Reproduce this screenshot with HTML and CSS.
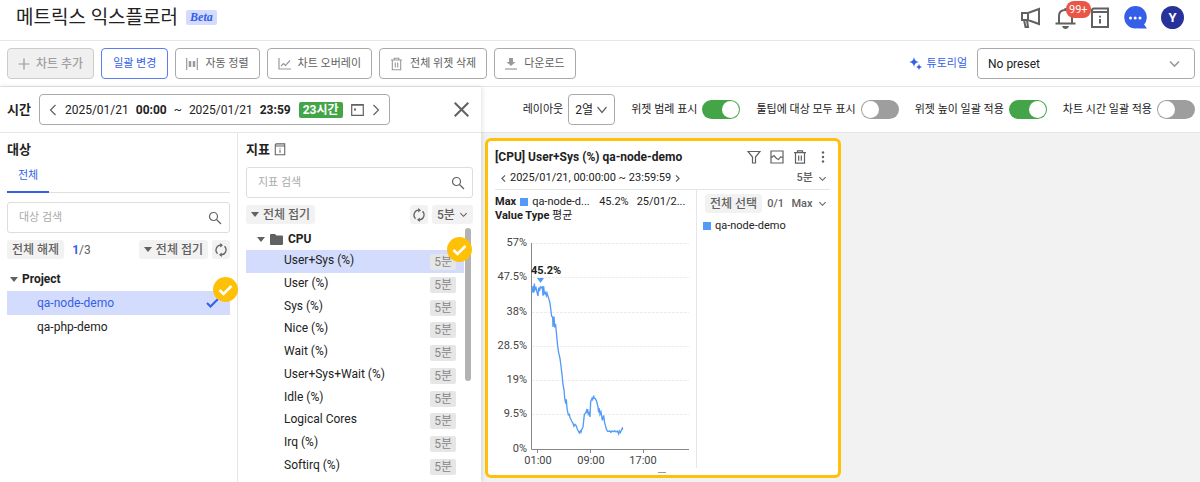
FILE: index.html
```html
<!DOCTYPE html>
<html lang="ko">
<head>
<meta charset="utf-8">
<title>메트릭스 익스플로러</title>
<link rel="stylesheet" href="styles.css">
</head>
<body>
<svg class="defs" aria-hidden="true">
  <symbol id="search" viewBox="0 0 14 14"><circle cx="5.5" cy="5.5" r="4" /><path d="M8.500 8.500 13 13" /></symbol>
  <symbol id="sync" viewBox="0 0 14 14"><path d="M3.500 10.800A5 5 0 0 1 6.500 2.200M10.500 3.200A5 5 0 0 1 7.500 11.800" /><path class="fill" d="M6.200 0 9 2.300 6.200 4.600ZM7.800 9.400 5 11.700 7.800 14Z" /></symbol>
  <symbol id="down" viewBox="0 0 10 10"><path d="M1.500 3.500 5 7 8.500 3.500" /></symbol>
  <symbol id="wide-down" viewBox="0 0 12 12"><path d="M1.500 3 6 8.500 10.500 3" /></symbol>
  <symbol id="left" viewBox="0 0 8 14"><path d="M6.500 2 1.500 7 6.500 12" /></symbol>
  <symbol id="right" viewBox="0 0 8 14"><path d="M1.500 2 6.500 7 1.500 12" /></symbol>
  <symbol id="trash" viewBox="0 0 14 14"><path d="M1 2.700H13M4.500 2.500V.8H9.500V2.500M2.500 3V13.200H11.500V3M5.700 5.500V10.700M8.300 5.500V10.700" /></symbol>
  <symbol id="guide" viewBox="0 0 20 22"><path d="M18 5V20H2V3.500Q2 1.500 4 1.500H18V5H3M10 8.800V10.500M10 12V16.500" /></symbol>
</svg>

<header class="header">
  <h1 class="title">메트릭스 익스플로러</h1>
  <span class="beta">Beta</span>
  <nav class="header-icons">
    <button class="plain" aria-label="공지"><svg class="icon thick" width="21" height="22" viewBox="0 0 21 22"><path d="M2 6H8L19 2V17L8 13H2ZM8 6V13M4 13 5.500 20H8L7 13" /></svg></button>
    <button class="plain bell" aria-label="알림"><svg class="icon thick" width="21" height="24" viewBox="0 0 21 24"><path d="M4 17V10Q4 4 10.500 4T17 10V17M.5 17.500H20.500M10.500 2V4" /><path class="fill" d="M7 20H14Q13 23 10.500 23T7 20Z" /></svg><span class="count">99+</span></button>
    <button class="plain" aria-label="가이드"><svg class="icon thick" width="20" height="22"><use href="#guide" /></svg></button>
    <button class="plain" aria-label="채팅"><svg width="23" height="23" viewBox="0 0 23 23"><path fill="#355fe9" d="M11.500 0A11.200 11.200 0 1 1 11.500 22.500 11.200 11.200 0 0 1 11.500 0ZM19 17 23 22.500H14Z" /><g fill="#fff"><circle cx="6.500" cy="12" r="1.500" /><circle cx="11.200" cy="12" r="1.500" /><circle cx="16" cy="12" r="1.500" /></g></svg></button>
    <button class="avatar">Y</button>
  </nav>
</header>

<div class="toolbar">
  <button class="btn add" disabled><svg class="icon" width="12" height="12" viewBox="0 0 12 12"><path d="M6 .5V11.500M.5 6H11.500" /></svg>차트 추가</button>
  <button class="btn primary">일괄 변경</button>
  <button class="btn"><svg class="icon" width="12" height="12" viewBox="0 0 12 12"><path d="M.7 0V12M11.300 0V12" /><path class="bars" d="M4 3V9M8 3V9" /></svg>자동 정렬</button>
  <button class="btn"><svg class="icon" width="13" height="12" viewBox="0 0 13 12"><path d="M1 0V11H13M3 8 5.500 5.500 7.500 7.500 12 2.500" /></svg>차트 오버레이</button>
  <button class="btn"><svg class="icon" width="13" height="14"><use href="#trash" /></svg>전체 위젯 삭제</button>
  <button class="btn"><svg class="icon" width="12" height="13" viewBox="0 0 12 13"><path class="fill" d="M4 1H8V5H10.500L6 9 1.500 5H4Z" /><path d="M0 12H12" /></svg>다운로드</button>
  <a class="tutorial" href="#tutorial"><svg width="13" height="13" viewBox="0 0 13 13"><path fill="#355fe9" d="M5 0Q5.500 4.500 10 5 5.500 5.500 5 10 4.500 5.500 0 5 4.500 4.500 5 0ZM10 7Q10.400 9.600 13 10 10.400 10.400 10 13 9.600 10.400 7 10 9.600 9.600 10 7Z" /></svg>튜토리얼</a>
  <label class="select preset"><select aria-label="프리셋"><option>No preset</option></select><svg class="icon" width="13" height="13"><use href="#down" /></svg></label>
</div>

<main class="main">
  <section class="panel">
    <div class="time-row">
      <strong class="time-label">시간</strong>
      <div class="range">
        <button class="plain" aria-label="이전"><svg class="icon" width="8" height="14"><use href="#left" /></svg></button>
        <div class="dates"><span>2025/01/21</span><b>00:00</b><span>~</span><span>2025/01/21</span><b>23:59</b></div>
        <span class="hours">23시간</span>
        <button class="plain" aria-label="달력"><svg class="icon" width="13" height="13" viewBox="0 0 13 13"><path d="M.7 1.500H12.300V12.300H.7ZM.7 2.200H12.300" /><path class="fill" d="M3 5.500H5V7.500H3Z" /></svg></button>
        <button class="plain" aria-label="다음"><svg class="icon" width="8" height="14"><use href="#right" /></svg></button>
      </div>
      <button class="plain close" aria-label="닫기"><svg class="icon thick" width="15" height="15" viewBox="0 0 15 15"><path d="M.7.7 14.300 14.300M14.300.7.7 14.300" /></svg></button>
    </div>
    <div class="columns">
      <section class="targets">
        <h2>대상</h2>
        <div class="tabs"><button class="tab">전체</button></div>
        <label class="search"><input type="text" placeholder="대상 검색" aria-label="대상 검색"><svg class="icon" width="14" height="14"><use href="#search" /></svg></label>
        <div class="chips">
          <button class="chip">전체 해제</button>
          <span class="ratio"><b>1</b>/3</span>
          <button class="chip push"><i class="caret"></i>전체 접기</button>
          <button class="chip square" aria-label="새로고침"><svg class="icon" width="14" height="14"><use href="#sync" /></svg></button>
        </div>
        <div class="project"><i class="caret"></i>Project</div>
        <ul class="tree">
          <li class="on">qa-node-demo<svg class="icon" width="13" height="10" viewBox="0 0 13 10"><path d="M1 5 4.500 8.500 12 1" /></svg><span class="mark"><svg width="15" height="12" viewBox="0 0 15 12"><path d="M1.500 6 5.500 10 13.500 2" /></svg></span></li>
          <li>qa-php-demo</li>
        </ul>
      </section>
      <section class="metrics">
        <h2>지표<svg class="icon" width="12" height="13"><use href="#guide" /></svg></h2>
        <label class="search"><input type="text" placeholder="지표 검색" aria-label="지표 검색"><svg class="icon" width="14" height="14"><use href="#search" /></svg></label>
        <div class="chips">
          <button class="chip"><i class="caret"></i>전체 접기</button>
          <button class="chip square push" aria-label="새로고침"><svg class="icon" width="14" height="14"><use href="#sync" /></svg></button>
          <label class="select chip"><select aria-label="간격"><option>5분</option></select><svg class="icon" width="9" height="9"><use href="#down" /></svg></label>
        </div>
        <div class="scroll">
          <div class="group"><i class="caret"></i><svg width="13" height="11" viewBox="0 0 13 11"><path fill="#616161" d="M1 0H5L6.500 1.500H12Q13 1.500 13 2.500V10Q13 11 12 11H1Q0 11 0 10V1Q0 0 1 0Z" /></svg>CPU</div>
          <ul class="list">
            <li class="on">User+Sys (%)<span>5분</span></li>
            <li>User (%)<span>5분</span></li>
            <li>Sys (%)<span>5분</span></li>
            <li>Nice (%)<span>5분</span></li>
            <li>Wait (%)<span>5분</span></li>
            <li>User+Sys+Wait (%)<span>5분</span></li>
            <li>Idle (%)<span>5분</span></li>
            <li>Logical Cores<span>5분</span></li>
            <li>Irq (%)<span>5분</span></li>
            <li>Softirq (%)<span>5분</span></li>
          </ul>
          <div class="thumb"></div>
          <span class="mark"><svg width="15" height="12" viewBox="0 0 15 12"><path d="M1.500 6 5.500 10 13.500 2" /></svg></span>
        </div>
      </section>
    </div>
  </section>

  <section class="board">
    <div class="options">
      <div class="option"><label for="layout">레이아웃</label><span class="select layout"><select id="layout"><option>2열</option></select><svg class="icon" width="12" height="12"><use href="#wide-down" /></svg></span></div>
      <label class="option">위젯 범례 표시<input type="checkbox" class="switch" checked></label>
      <label class="option">툴팁에 대상 모두 표시<input type="checkbox" class="switch"></label>
      <label class="option">위젯 높이 일괄 적용<input type="checkbox" class="switch" checked></label>
      <label class="option">차트 시간 일괄 적용<input type="checkbox" class="switch"></label>
    </div>
    <div class="grid">
      <article class="widget">
        <div class="widget-head">
          <h3>[CPU] User+Sys (%) qa-node-demo</h3>
          <button class="plain" aria-label="필터"><svg class="icon" width="14" height="14" viewBox="0 0 14 14"><path d="M1 1.500H13L8.500 7V13H5.500V7Z" /></svg></button>
          <button class="plain" aria-label="차트"><svg class="icon" width="14" height="14" viewBox="0 0 14 14"><path d="M1 1H13V13H1ZM1 8 4 5.500 6.500 8.500 8.500 9.500 10.500 7 13 7.500" /></svg></button>
          <button class="plain" aria-label="삭제"><svg class="icon" width="14" height="14"><use href="#trash" /></svg></button>
          <button class="plain" aria-label="더보기"><svg width="14" height="14" viewBox="0 0 14 14" fill="#616161"><circle cx="7" cy="2.500" r="1.200" /><circle cx="7" cy="7" r="1.200" /><circle cx="7" cy="11.500" r="1.200" /></svg></button>
        </div>
        <div class="widget-time">
          <button class="plain" aria-label="이전"><svg class="icon small" width="5" height="9"><use href="#left" /></svg></button>
          <span>2025/01/21, 00:00:00 ~ 23:59:59</span>
          <button class="plain" aria-label="다음"><svg class="icon small" width="5" height="9"><use href="#right" /></svg></button>
          <label class="select push"><select aria-label="위젯 간격"><option>5분</option></select><svg class="icon" width="9" height="9"><use href="#down" /></svg></label>
        </div>
        <div class="widget-body">
          <div class="plot">
            <div class="summary"><b>Max</b><i class="swatch"></i><span class="name">qa-node-d...</span><span>45.2%</span><span class="when">25/01/2...</span></div>
            <div class="kind"><b>Value Type</b> 평균</div>
            <svg class="chart" width="200" height="237" viewBox="0 0 200 237" role="img" aria-label="CPU User+Sys">
              <path class="gridline" d="M37 12.500H194M37 46.500H194M37 81.500H194M37 115.500H194M37 149.500H194M37 183.500H194" />
              <path class="axis" d="M36.500 12V218.500H194M42.500 218V222M95.500 218V222M148.500 218V222" />
              <g class="ylabel"><text x="32" y="15">57%</text><text x="32" y="49">47.5%</text><text x="32" y="84">38%</text><text x="32" y="118">28.5%</text><text x="32" y="152">19%</text><text x="32" y="186">9.5%</text><text x="32" y="221">0%</text></g>
              <g class="xlabel"><text x="43" y="233">01:00</text><text x="96" y="233">09:00</text><text x="148" y="233">17:00</text></g>
              <path class="pin" d="M42 47H49L45.500 52Z" />
              <text class="peak" x="36" y="43">45.2%</text>
              <g transform="translate(-11 0) scale(.3333)"><polyline class="line" points="143,170 145,184 147,165 149,185 151,158 153,176 156,170 159,183 162,195 164,170 167,180 169,168 172,170 175,168 177,194 179,166 181,188 184,184 187,194 189,186 192,196 195,205 198,216 201,240 203,256 206,258 207,288 210,257 212,286 215,282 218,314 221,345 224,365 228,382 231,405 234,430 237,460 240,476 242,501 245,518 247,505 249,532 253,552 256,550 258,560 263,570 267,577 270,586 273,580 276,583 280,594 283,600 286,606 289,600 291,604 294,594 297,588 299,570 301,550 305,546 308,538 310,546 311,534 313,550 316,545 318,558 320,512 324,502 326,506 329,494 331,502 334,503 338,511 342,528 344,544 346,532 348,550 351,543 355,568 359,553 362,576 365,586 368,597 371,601 378,600 381,604 384,600 389,602 392,599 396,603 400,600 404,609 406,600 409,605 412,598 415,592 416,597" /></g>
            </svg>
          </div>
          <div class="legend">
            <div class="legend-head"><button class="chip">전체 선택</button><span class="num">0/1</span><label class="select push"><select aria-label="정렬"><option>Max</option></select><svg class="icon" width="9" height="9"><use href="#down" /></svg></label></div>
            <div class="legend-item"><i class="swatch"></i>qa-node-demo</div>
          </div>
        </div>
        <div class="handle"></div>
      </article>
    </div>
  </section>
</main>
</body>
</html>
```
FILE: styles.css
```css
* { box-sizing: border-box; }
body {
  margin: 0;
  min-height: 100vh;
  display: flex;
  flex-direction: column;
  background: #fff;
  color: #222;
  font: 12px/16px Roboto, "Noto Sans CJK KR", sans-serif;
}
h1, h2, h3, ul { margin: 0; padding: 0; list-style: none; }
button, select, input { font: inherit; color: inherit; }
button { cursor: pointer; white-space: nowrap; }
b, strong { font-weight: 700; }
.defs { position: absolute; width: 0; height: 0; }
.icon { flex: none; fill: none; stroke: #616161; stroke-width: 1.2; }
.thick { stroke-width: 2; }
.small { stroke-width: 2; }
.fill { fill: #616161; stroke: none; }
.plain { display: flex; padding: 0; border: 0; background: none; }
.push { margin-left: auto; }

.header { display: flex; align-items: center; height: 41px; padding: 0 16px; border-bottom: 1px solid #e6e6e6; }
.title { padding-bottom: 5px; font-size: 19px; line-height: 24px; font-weight: 400; }
.beta { margin: 0 0 5px 8px; padding: 0 4px; border-radius: 2px; background: #d3dcfc; color: #355fe9; font: italic 700 12px/15px "Liberation Serif", serif; }
.header-icons { display: flex; align-items: center; gap: 14px; margin-left: auto; padding-bottom: 5px; }
.bell { position: relative; }
.count { position: absolute; left: 11px; top: -5px; padding: 0 3px; border-radius: 8px; background: #ea5546; color: #fff; font-size: 11px; line-height: 17px; }
.avatar { width: 23px; height: 23px; padding: 0; border: 0; border-radius: 50%; background: #27329a; color: #fff; font-weight: 700; font-size: 13px; }

.toolbar { display: flex; align-items: center; gap: 7px; height: 46px; padding: 0 5px 0 7px; border-bottom: 1px solid #e6e6e6; }
.btn { display: flex; align-items: center; gap: 7px; height: 31px; padding: 0 10px; border: 1px solid #aaa; border-radius: 4px; background: #fff; color: #616161; font-size: 11px; }
.btn .icon { stroke: #999; }
.btn .fill { fill: #999; stroke: none; }
.btn .bars { stroke-width: 2.5; }
.btn.add { gap: 6px; border-color: #ccc; background: #f0f0f0; color: #a0a0a0; font-size: 12px; font-weight: 500; }
.btn.primary { padding: 0 11px; border-color: #5b7df0; color: #355fe9; }
.tutorial { display: flex; align-items: center; gap: 5px; margin: 0 3px 0 auto; color: #355fe9; font-size: 11px; text-decoration: none; }
.select { display: inline-flex; align-items: center; }
.select select { appearance: none; padding: 0; border: 0; background: none; outline: 0; }
.preset { width: 218px; height: 31px; padding: 0 13px 0 10px; border: 1px solid #aaa; border-radius: 4px; }
.preset select { flex: 1; }
.preset .icon { stroke: #999; }

.main { flex: 1; display: flex; }
.panel { flex: none; display: flex; flex-direction: column; width: 481px; box-shadow: 1px 0 5px rgba(0, 0, 0, .12); z-index: 1; }
.time-row { display: flex; align-items: center; height: 46px; padding: 0 12px 0 7px; border-bottom: 1px solid #e6e6e6; }
.time-label { font-size: 13px; }
.range { display: flex; align-items: center; gap: 8px; height: 31px; margin-left: 8px; padding: 0 9px; border: 1px solid #aaa; border-radius: 4px; white-space: nowrap; }
.dates { display: flex; gap: 7px; }
.hours { padding: 0 4px; border-radius: 2px; background: #43a547; color: #fff; font-weight: 700; }
.close { margin-left: auto; }
.columns { flex: 1; display: flex; }
.targets { width: 238px; padding: 8px 7px; border-right: 1px solid #e6e6e6; }
.metrics { flex: 1; display: flex; flex-direction: column; padding: 8px 8px 5px; }
h2 { display: flex; align-items: center; gap: 4px; font-size: 13px; line-height: 17px; }
h2 .icon { stroke-width: 1.8; }
.tabs { display: flex; height: 35px; border-bottom: 1px solid #e0e0e0; }
.tab { height: 35px; padding: 4px 11px 2px; border: 0; border-bottom: 2px solid #355fe9; background: none; color: #355fe9; font-size: 11px; }
.search { display: flex; align-items: center; height: 31px; margin-top: 9px; padding: 0 7px 0 11px; border: 1px solid #ddd; border-radius: 3px; }
.search input { flex: 1; min-width: 0; padding: 0; border: 0; outline: 0; font-size: 11px; }
.search input::placeholder { color: #aaa; }
.chips { display: flex; align-items: center; gap: 4px; margin-top: 7px; }
.chip { display: flex; align-items: center; gap: 4px; height: 19px; padding: 0 5px; border: 0; border-radius: 3px; background: #f2f2f2; color: #616161; font-size: 12px; font-weight: 500; }
.square { padding: 0 2px; }
.ratio { margin-left: 4px; color: #616161; }
.ratio b { color: #355fe9; }
.caret { flex: none; border: 4px solid transparent; border-top: 5px solid #616161; border-bottom: 0; }
.project { display: flex; align-items: center; gap: 4px; margin-top: 8px; padding-left: 3px; line-height: 24px; font-weight: 700; }
.tree li { position: relative; display: flex; align-items: center; justify-content: space-between; padding: 0 11px 0 30px; line-height: 24px; }
.on { background: #d3dcfc; }
.tree .on { color: #355fe9; }
.tree .icon { stroke: #355fe9; stroke-width: 2; }
.mark { position: absolute; right: -8px; top: -14px; display: flex; align-items: center; justify-content: center; width: 25px; height: 25px; border-radius: 50%; background: #ffc107; }
.mark path { fill: none; stroke: #fff; stroke-width: 2.5; }
.metrics .search, .metrics .chips { flex: none; }
.scroll { flex: 1; position: relative; display: flex; flex-direction: column; margin-top: 4px; }
.group { display: flex; align-items: center; gap: 5px; padding-left: 11px; line-height: 22px; font-weight: 700; }
.list { flex: 1; display: flex; flex-direction: column; margin-right: 9px; }
.list li { flex: 1; display: flex; align-items: center; justify-content: space-between; padding: 0 8px 2px 38px; }
.list span { margin-top: 4px; padding: 0 4px; border-radius: 2px; background: #e6e6e6; color: #888; }
.thumb { position: absolute; right: 2px; top: 0; width: 6px; height: 153px; border-radius: 3px; background: #b3b3b3; }
.scroll .mark { right: 1px; top: 9px; }

.board { flex: 1; display: flex; flex-direction: column; min-width: 0; }
.options { display: flex; align-items: center; justify-content: flex-end; gap: 16px; height: 46px; padding-right: 5px; border-bottom: 1px solid #e6e6e6; font-size: 11px; white-space: nowrap; }
.option { display: flex; align-items: center; gap: 5px; }
.layout { gap: 3px; height: 31px; padding: 0 6px; border: 1px solid #aaa; border-radius: 4px; font-size: 12px; }
.switch { appearance: none; display: flex; align-items: center; width: 38px; height: 19px; margin: 0; padding: 0 1px; border-radius: 10px; background: #9e9e9e; }
.switch::before { content: ""; width: 17px; height: 17px; border-radius: 50%; background: #fff; }
.switch:checked { justify-content: flex-end; background: #43a547; }
.grid { flex: 1; display: grid; grid-template-columns: repeat(2, 1fr); align-items: start; padding: 5px 4px 4px; background: #f2f2f2; }
.widget { padding: 6px 8px 2px 7px; border: 3px solid #ffc107; border-radius: 6px; background: #fff; }
.widget-head { display: flex; align-items: center; gap: 9px; }
h3 { flex: 1; font-size: 12px; line-height: 20px; white-space: nowrap; }
.widget-time { display: flex; align-items: center; gap: 4px; height: 22px; padding: 0 3px 0 6px; font-size: 11px; }
.widget .select { gap: 4px; color: #616161; font-size: 11px; font-weight: 500; }
.widget-body { display: flex; border-top: 1px solid #e6e6e6; }
.plot { width: 202px; border-right: 1px solid #e6e6e6; padding-top: 5px; font-size: 11px; line-height: 14px; }
.summary { display: flex; align-items: center; gap: 4px; white-space: nowrap; }
.swatch { flex: none; width: 8px; height: 8px; background: #529bf8; }
.name { width: 63px; }
.when { margin-left: 4px; }
.chart { display: block; margin-top: 8px; }
.gridline { stroke: #eee; stroke-dasharray: 3 1; }
.axis { fill: none; stroke: #888; }
.chart text { fill: #444; font-size: 11px; }
.ylabel { text-anchor: end; }
.xlabel { text-anchor: middle; }
.chart .peak { fill: #222; font-weight: 700; }
.pin { fill: #529bf8; }
.line { fill: none; stroke: #529bf8; stroke-width: 4; }
.legend { flex: 1; padding: 4px 3px 0 6px; font-size: 11px; }
.legend-head { display: flex; align-items: center; gap: 5px; color: #616161; font-weight: 500; }
.legend-head .chip { margin-left: 2px; }
.legend-item { display: flex; align-items: center; gap: 4px; margin-top: 5px; }
.handle { width: 8px; height: 1px; margin: 4px auto 0; background: #999; }
```
